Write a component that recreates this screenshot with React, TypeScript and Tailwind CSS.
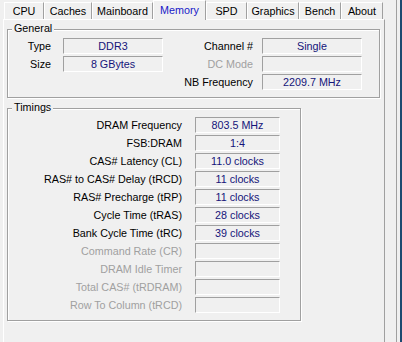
import React from "react";

const tabs = [
  { name: "CPU", w: 40 },
  { name: "Caches", w: 48 },
  { name: "Mainboard", w: 61 },
  { name: "Memory", w: 53, sel: true },
  { name: "SPD", w: 41 },
  { name: "Graphics", w: 52 },
  { name: "Bench", w: 42 },
  { name: "About", w: 42 },
];

function Field({ value, w }: { value?: string; w: string }) {
  return (
    <div
      className={`${w} h-[16px] border-t border-l border-[#a0a0a0] border-b-white border-r-white border-b border-r text-center text-[#14147a] leading-[14px]`}
    >
      {value ?? ""}
    </div>
  );
}

function Row({
  label,
  value,
  disabled,
  labelW,
  fieldW,
  gap,
}: {
  label: string;
  value?: string;
  disabled?: boolean;
  labelW: string;
  fieldW: string;
  gap: string;
}) {
  return (
    <div className={`flex h-[16px] items-center ${gap}`}>
      <div
        className={`${labelW} text-right whitespace-nowrap leading-[16px] ${disabled ? "text-[#a0a0a0]" : "text-black"}`}
      >
        {label}
      </div>
      <Field value={value} w={fieldW} />
    </div>
  );
}

const timings: { l: string; v?: string; d?: boolean }[] = [
  { l: "DRAM Frequency", v: "803.5 MHz" },
  { l: "FSB:DRAM", v: "1:4" },
  { l: "CAS# Latency (CL)", v: "11.0 clocks" },
  { l: "RAS# to CAS# Delay (tRCD)", v: "11 clocks" },
  { l: "RAS# Precharge (tRP)", v: "11 clocks" },
  { l: "Cycle Time (tRAS)", v: "28 clocks" },
  { l: "Bank Cycle Time (tRC)", v: "39 clocks" },
  { l: "Command Rate (CR)", d: true },
  { l: "DRAM Idle Timer", d: true },
  { l: "Total CAS# (tRDRAM)", d: true },
  { l: "Row To Column (tRCD)", d: true },
];

export default function App() {
  return (
    <div
      className="w-[402px] h-[342px] bg-[#f0f0f0] overflow-hidden flex text-[10.75px]"
      style={{ fontFamily: '"Liberation Sans", Arial, sans-serif' }}
    >
      <div className="w-[396px] flex flex-col">
        <div className="relative z-10 h-[19px] flex items-end pl-[4px]">
          {tabs.map((t) =>
            t.sel ? (
              <div
                key={t.name}
                style={{ width: t.w }}
                className="h-[20px] mb-[-1px] bg-[#f0f0f0] border-l border-t border-white border-r border-r-[#a0a0a0] flex items-start justify-center pt-[2px] text-[#1818c8] leading-[14px]"
              >
                {t.name}
              </div>
            ) : (
              <div
                key={t.name}
                style={{ width: t.w }}
                className="h-[17px] border-l border-t border-white border-r border-r-[#a0a0a0] flex items-center justify-center text-black leading-[14px]"
              >
                {t.name}
              </div>
            )
          )}
        </div>
        <div className="ml-[3px] w-[382px] flex-1 border-t border-l border-white border-r border-r-[#a0a0a0]">
          {/* General */}
          <div className="relative mt-[9px] ml-[3px] w-[373px] h-[69px] border border-[#a0a0a0] shadow-[inset_1px_1px_0_#fff,1px_1px_0_#fff] pt-[8px]">
            <span className="absolute -top-[8px] left-[4px] px-[2px] bg-[#f0f0f0] leading-[13px]">
              General
            </span>
            <div className="flex">
              <div className="flex flex-col gap-[2px]">
                <Row label="Type" value="DDR3" labelW="w-[43px]" fieldW="w-[100px]" gap="gap-[12px]" />
                <Row label="Size" value="8 GBytes" labelW="w-[43px]" fieldW="w-[100px]" gap="gap-[12px]" />
              </div>
              <div className="flex flex-col gap-[2px]">
                <Row label="Channel #" value="Single" labelW="w-[90px]" fieldW="w-[100px]" gap="gap-[9px]" />
                <Row label="DC Mode" disabled labelW="w-[90px]" fieldW="w-[100px]" gap="gap-[9px]" />
                <Row label="NB Frequency" value="2209.7 MHz" labelW="w-[90px]" fieldW="w-[100px]" gap="gap-[9px]" />
              </div>
            </div>
          </div>
          {/* Timings */}
          <div className="relative mt-[10px] ml-[3px] w-[294px] h-[213px] border border-[#a0a0a0] shadow-[inset_1px_1px_0_#fff,1px_1px_0_#fff] pt-[8px]">
            <span className="absolute -top-[8px] left-[4px] px-[2px] bg-[#f0f0f0] leading-[13px]">
              Timings
            </span>
            <div className="flex flex-col gap-[2px]">
              {timings.map((t) => (
                <Row
                  key={t.l}
                  label={t.l}
                  value={t.v}
                  disabled={t.d}
                  labelW="w-[174px]"
                  fieldW="w-[85px]"
                  gap="gap-[13px]"
                />
              ))}
            </div>
          </div>
        </div>
      </div>
      <div className="w-px bg-[#a0a0a0]" />
      <div className="w-[3px]" />
      <div className="w-[2px] bg-[#1b4a70]" />
    </div>
  );
}
